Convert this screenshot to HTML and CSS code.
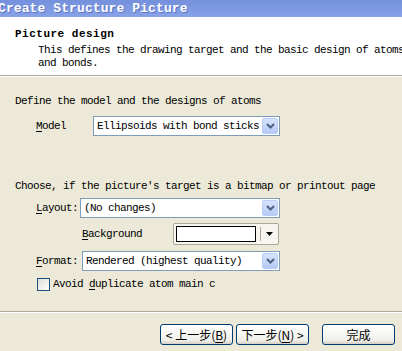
FILE: index.html
```html
<!DOCTYPE html>
<html>
<head>
    <link rel="stylesheet" href="styles.css">
</head>
<body>
    <div class="titlebar">Create Structure Picture</div>

    <div class="header">
        <div class="header-title">Picture design</div>
        <div class="header-desc">This defines the drawing target and the basic design of atoms<br>and bonds.</div>
    </div>

    <div class="content">
        <div class="section-text">Define the model and the designs of atoms</div>
        <div class="row row-model">
            <span class="label w-model"><u>M</u>odel</span>
            <div class="combo w-187">
                <span class="combo-text">Ellipsoids with bond sticks</span>
                <span class="combo-btn"><svg width="9" height="6" viewBox="0 0 9 6"><path d="M1 1 L4.5 4.5 L8 1" fill="none" stroke="#4d6185" stroke-width="2"/></svg></span>
            </div>
        </div>

        <div class="section-text gap-choose">Choose, if the picture's target is a bitmap or printout page</div>
        <div class="row">
            <span class="label w-layout"><u>L</u>ayout:</span>
            <div class="combo w-200">
                <span class="combo-text">(No changes)</span>
                <span class="combo-btn"><svg width="9" height="6" viewBox="0 0 9 6"><path d="M1 1 L4.5 4.5 L8 1" fill="none" stroke="#4d6185" stroke-width="2"/></svg></span>
            </div>
        </div>
        <div class="row row-bg">
            <span class="label w-bg"><u>B</u>ackground</span>
            <div class="colorpick">
                <span class="swatch"></span>
                <span class="pick-sep"></span>
                <span class="pick-arrow"><svg width="7" height="4" viewBox="0 0 7 4"><path d="M0 0 H7 L3.5 4 Z" fill="#000"/></svg></span>
            </div>
        </div>
        <div class="row row-format">
            <span class="label w-format"><u>F</u>ormat:</span>
            <div class="combo w-198">
                <span class="combo-text">Rendered (highest quality)</span>
                <span class="combo-btn"><svg width="9" height="6" viewBox="0 0 9 6"><path d="M1 1 L4.5 4.5 L8 1" fill="none" stroke="#4d6185" stroke-width="2"/></svg></span>
            </div>
        </div>
        <div class="row row-check">
            <span class="checkbox"></span>
            <span class="check-text">Avoid <u>d</u>uplicate atom main c</span>
        </div>
    </div>

    <div class="footer">
        <button class="btn btn-back">&lt; 上一步(<u>B</u>)</button>
        <button class="btn btn-next">下一步(<u>N</u>) &gt;</button>
        <button class="btn btn-finish">完成</button>
    </div>
</body>
</html>
```

FILE: styles.css
```css
body { margin: 0; width: 402px; height: 351px; overflow: hidden; background: #ece9d8; font-family: "Liberation Mono", "Noto Sans CJK SC", monospace; font-size: 11px; letter-spacing: -0.6px; line-height: 13px; color: #000; }
u { text-decoration: underline; text-underline-offset: 2px; }

.titlebar { height: 17px; background: linear-gradient(#7590dc, #87a2e8); color: #fff; font-weight: bold; font-size: 13px; letter-spacing: 0.1px; line-height: 17px; margin-left: -2px; white-space: nowrap; text-shadow: 1px 1px 0 #5c74c0; }

.header { height: 59px; background: #fff; border-bottom: 1px solid #aca899; padding-left: 15px; box-sizing: border-box; padding-top: 11px; }
.header-title { font-weight: bold; letter-spacing: 0.5px; }
.header-desc { margin-left: 23px; margin-top: 3px; white-space: nowrap; }

.content { border-top: 1px solid #fff; padding: 18px 0 0 15px; height: 235px; box-sizing: border-box; }
.section-text { white-space: nowrap; }
.gap-choose { margin-top: 44px; }

.row { display: flex; align-items: center; margin-top: 5px; padding-left: 21px; }
.row-model { margin-top: 8px; }
.row-bg { padding-left: 67px; height: 22px; }
.row-format { margin-top: 6px; }
.row-check { margin-top: 7px; padding-left: 22px; }

.label { flex: none; white-space: nowrap; }
.w-model { width: 57px; }
.w-layout { width: 44px; }
.w-bg { width: 91px; }
.w-format { width: 46px; }

.combo { height: 20px; box-sizing: border-box; border: 1px solid #7f9db9; background: #fff; display: flex; align-items: center; justify-content: space-between; padding: 0 1px 0 3px; }
.w-187 { width: 187px; }
.w-200 { width: 200px; }
.w-198 { width: 198px; }
.combo-text { white-space: nowrap; }
.combo-btn { width: 16px; height: 16px; box-sizing: border-box; border: 1px solid #b9cdf8; border-radius: 2px; background: linear-gradient(#d7e3fc, #b4c9f5); display: flex; align-items: center; justify-content: center; }

.colorpick { width: 106px; height: 22px; box-sizing: border-box; border: 1px solid #aca899; border-radius: 2px; background: #f6f5ef; display: flex; align-items: center; padding-left: 2px; }
.swatch { width: 78px; height: 14px; border: 1px solid #000; background: #fff; }
.pick-sep { width: 1px; height: 14px; background: #aca899; margin-left: 4px; }
.pick-arrow { flex: 1; display: flex; justify-content: center; }

.checkbox { width: 13px; height: 13px; box-sizing: border-box; border: 1px solid #1c5180; background: linear-gradient(135deg, #dcdcd7, #fff); flex: none; }
.check-text { width: 165px; overflow: hidden; white-space: nowrap; margin-left: 3px; }

.footer { border-top: 1px solid #aca899; box-shadow: inset 0 1px 0 #fff; display: flex; padding: 12px 0 0 160px; }
.btn { height: 21px; width: 73px; box-sizing: border-box; border: 1px solid #003c74; border-radius: 3px; background: linear-gradient(#ffffff, #f0f0ea 80%, #d6d0c5); font-family: "Noto Sans CJK SC", sans-serif; font-size: 12px; letter-spacing: 0; padding: 0; line-height: 18px; color: #000; }
.btn-next { margin-left: 3px; }
.btn-finish { margin-left: 13px; }
```
